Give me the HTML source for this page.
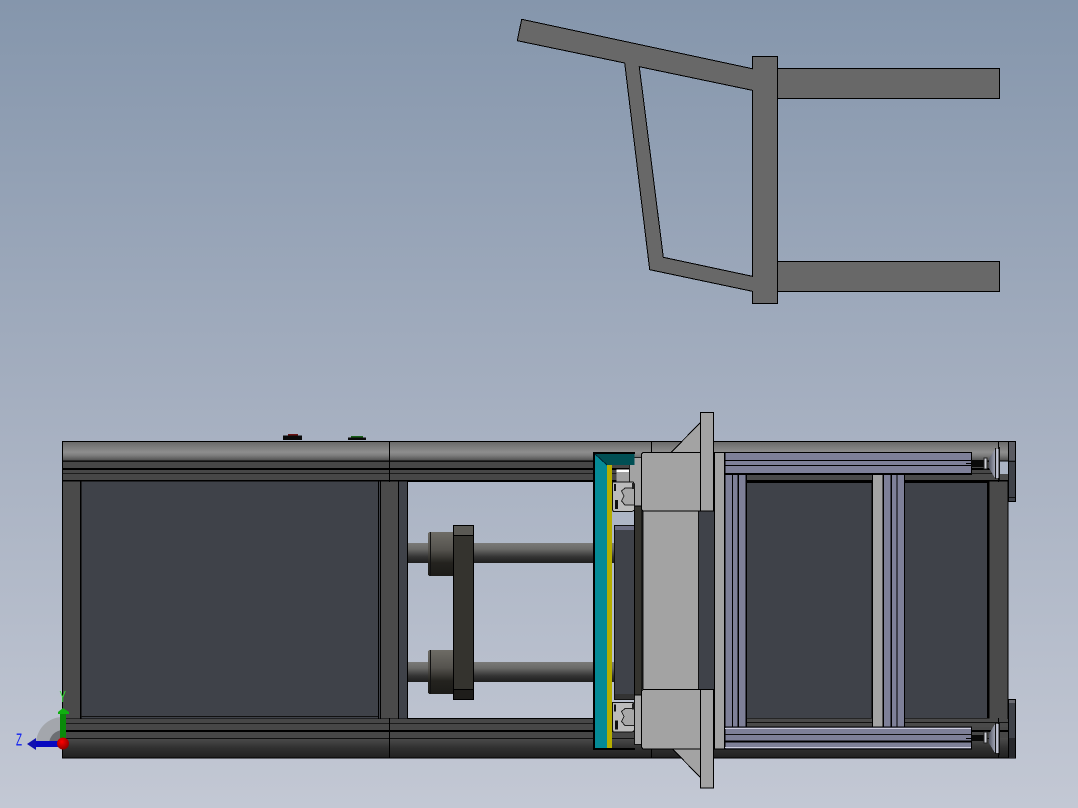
<!DOCTYPE html>
<html><head><meta charset="utf-8"><style>html,body{margin:0;padding:0;width:1078px;height:808px;overflow:hidden;background:#a9b2c2}svg{display:block}</style></head><body>
<svg width="1078" height="808" viewBox="0 0 1078 808" xmlns="http://www.w3.org/2000/svg" shape-rendering="crispEdges">
<defs>
<linearGradient id="bg" x1="0" y1="0" x2="0" y2="1"><stop offset="0" stop-color="#8596ac"/><stop offset=".5" stop-color="#a5afc0"/><stop offset="1" stop-color="#c3c8d4"/></linearGradient>
<linearGradient id="tr" x1="0" y1="0" x2="0" y2="1"><stop offset="0" stop-color="#676767"/><stop offset=".25" stop-color="#7a7a7a"/><stop offset=".55" stop-color="#8e8e8e"/><stop offset=".72" stop-color="#7c7c7c"/><stop offset="1" stop-color="#4c4c4c"/></linearGradient>
<linearGradient id="br" x1="0" y1="0" x2="0" y2="1"><stop offset="0" stop-color="#4c4c4c"/><stop offset=".5" stop-color="#303030"/><stop offset="1" stop-color="#202020"/></linearGradient>
<linearGradient id="rod" x1="0" y1="0" x2="0" y2="1"><stop offset="0" stop-color="#7a7a78"/><stop offset=".3" stop-color="#6a6a68"/><stop offset=".7" stop-color="#333"/><stop offset="1" stop-color="#1e1e1e"/></linearGradient>
<linearGradient id="hub" x1="0" y1="0" x2="0" y2="1"><stop offset="0" stop-color="#6e6c66"/><stop offset=".4" stop-color="#55534e"/><stop offset=".7" stop-color="#24231f"/><stop offset="1" stop-color="#1c1b18"/></linearGradient>
<linearGradient id="disc" x1="0" y1="0" x2="1" y2="0"><stop offset="0" stop-color="#555866"/><stop offset=".6" stop-color="#a8acbc"/><stop offset="1" stop-color="#e0e2ee"/></linearGradient>
<radialGradient id="ball" cx=".4" cy=".35" r=".7"><stop offset="0" stop-color="#f00"/><stop offset="1" stop-color="#800"/></radialGradient>
<g id="disc1"><path d="M989 12 L995 2 H1000 V31 H995 L989 21Z" fill="url(#disc)"/><rect x="995" y="1" width="1" height="31" fill="#111"/><rect x="998.500" y="0" width="1.500" height="33" fill="#111"/></g>
<g id="carr"><path d="M612.500 482 H633 L634.500 484 V510 L632 511.500 H613.500 L612.500 510Z" fill="#bcbcbc" stroke="#111" stroke-width="1"/><path d="M634 488 H625 L621.500 491 L624 496 L621.500 501 L625 505 H634" fill="#a8a8a8" stroke="#222" stroke-width="1"/><rect x="614" y="484" width="2" height="7" fill="#111"/><rect x="615" y="500" width="3" height="9" fill="#111"/><rect x="632" y="483" width="2.500" height="6" fill="#222"/></g>
</defs>
<rect width="1078" height="808" fill="url(#bg)"/>

<!-- upper profile -->
<path fill-rule="evenodd" fill="#686868" stroke="#000" stroke-width="1" d="M521.700 19.300 L752.300 68.700 V56.300 H777.700 V68.300 H999.700 V98.300 H777.700 V261.300 H999.700 V291.300 H777.700 V303.300 H752.300 V291.300 L649.700 269.700 L624.700 63 L517.300 40.700Z M639.300 66.700 L752.300 90.300 V276.300 L663.300 257.300Z"/>
<path d="M777.500 68 V99 M777.500 261 V292" stroke="#000" stroke-width="1" fill="none"/>

<!-- buttons -->
<rect x="288" y="434" width="10" height="1.500" fill="#6a1212"/><rect x="283" y="435.500" width="19" height="4.500" fill="#0a0a0a"/>
<rect x="351" y="436" width="12" height="1.500" fill="#186018"/><rect x="348" y="437.500" width="18" height="2.500" fill="#0a0a0a"/>

<!-- rails -->
<rect x="62.500" y="441.500" width="953" height="19.500" fill="url(#tr)" stroke="#000" stroke-width="1"/>
<rect x="62.500" y="461" width="936" height="20.500" fill="#474747"/>
<rect x="62" y="461" width="936" height="1" fill="#111"/><rect x="62" y="468" width="936" height="2" fill="#000"/><rect x="62" y="473" width="936" height="1" fill="#1c1c1c"/><rect x="62" y="480" width="946" height="2" fill="#000"/>
<rect x="62.500" y="718" width="953" height="40" fill="#474747"/>
<rect x="62.500" y="738" width="953" height="20" fill="url(#br)"/>
<rect x="62" y="718" width="946" height="1" fill="#000"/><rect x="62" y="723" width="946" height="1" fill="#1c1c1c"/><rect x="62" y="730" width="946" height="2" fill="#000"/><rect x="62" y="738" width="936" height="1" fill="#111"/>
<rect x="62" y="757.500" width="954" height="1" fill="#000"/><rect x="62" y="441" width="1" height="317" fill="#000"/>

<!-- left frame -->
<rect x="63" y="481.500" width="17" height="237" fill="#4a4a4a"/>
<rect x="80" y="481.500" width="1.500" height="237" fill="#000"/>
<rect x="81.500" y="481.500" width="296.500" height="237" fill="#3f4249"/>
<rect x="81" y="716" width="297" height="1" fill="#111"/>
<rect x="378" y="481.500" width="3" height="237" fill="#000"/>
<rect x="379" y="481.500" width="1" height="237" fill="#3f4249"/>
<rect x="381" y="481.500" width="17" height="237" fill="#4a4a4a"/>
<rect x="398" y="481.500" width="1" height="237" fill="#000"/>
<rect x="399" y="481.500" width="8" height="237" fill="#3f4249"/>
<rect x="407" y="481.500" width="1" height="237" fill="#000"/>
<rect x="389" y="441" width="1" height="41" fill="#000"/><rect x="389" y="718" width="1" height="40" fill="#000"/>
<rect x="651" y="441" width="1" height="12" fill="#000"/><rect x="651" y="749" width="1" height="9" fill="#000"/>

<!-- rods & hubs -->
<rect x="408" y="543" width="206" height="20" fill="url(#rod)"/>
<rect x="408" y="662" width="206" height="20" fill="url(#rod)"/>
<rect x="428" y="532" width="26" height="44" rx="2" fill="url(#hub)"/><rect x="430" y="532" width="1" height="44" fill="#111"/>
<rect x="428" y="650" width="26" height="44" rx="2" fill="url(#hub)"/><rect x="430" y="650" width="1" height="44" fill="#111"/>
<rect x="453.500" y="525.500" width="20" height="174" fill="#34332e" stroke="#000" stroke-width="1"/>
<rect x="454" y="526" width="19" height="9" fill="#5a5954"/><rect x="454" y="535" width="19" height="1" fill="#000"/>
<rect x="454" y="690" width="19" height="9" fill="#1e1d1a"/><rect x="454" y="689" width="19" height="1" fill="#000"/>

<!-- behind teal -->
<rect x="616.500" y="472" width="13" height="10" fill="#a0a0a0"/>
<rect x="616.500" y="469.500" width="13" height="2.500" fill="#fff"/>
<rect x="614.500" y="525.500" width="20" height="174" fill="#3f4249" stroke="#111" stroke-width="1"/>
<rect x="615" y="526" width="19" height="4" fill="#6c6e84"/>
<rect x="615" y="694" width="19" height="5" fill="#333"/>
<rect x="629.500" y="457.500" width="12" height="49" fill="#a3a3a3" stroke="#222" stroke-width="1"/>
<rect x="634.500" y="694" width="7" height="50.500" fill="#a8a8a8" stroke="#111" stroke-width="1"/>
<rect x="634.500" y="506" width="7.500" height="189" fill="#34332e" stroke="#000" stroke-width="1"/>
<use href="#carr"/>
<use href="#carr" transform="translate(0,220.500)"/>

<!-- teal frame -->
<rect x="593" y="452" width="2.500" height="297.500" fill="#000"/>
<rect x="593" y="452" width="42" height="2" fill="#000"/>
<rect x="593" y="748" width="42" height="2" fill="#000"/>
<rect x="595" y="454" width="12" height="294" fill="#058a96"/>
<rect x="607" y="465" width="5" height="283" fill="#b5ad00"/>
<path d="M595 454 H634.500 V465 H607Z" fill="#004f54"/>
<path d="M595 454 L607 465" stroke="#002233" stroke-width="1" fill="none"/>

<!-- flange -->
<path d="M671 452.500 L700.500 422.500 V452.500Z" fill="#a3a3a3" stroke="#000" stroke-width="1"/>
<path d="M672.500 749 L700.500 777.500 V749Z" fill="#a3a3a3" stroke="#000" stroke-width="1"/>
<rect x="699" y="511" width="15" height="178.500" fill="#3f4249"/>
<rect x="642" y="511" width="57" height="178.500" fill="#a3a3a3"/>
<rect x="642" y="511" width="1.500" height="178" fill="#111"/>
<rect x="698" y="511" width="1" height="178" fill="#111"/>
<path d="M641.500 454 L643 452.500 H700.500 V511 H643 L641.500 509.500Z" fill="#a3a3a3" stroke="#000" stroke-width="1"/>
<path d="M641.500 691 L643 689.500 H700.500 V749 H643 L641.500 747Z" fill="#a3a3a3" stroke="#000" stroke-width="1"/>
<rect x="700.500" y="412.500" width="13" height="98.500" fill="#a3a3a3" stroke="#000" stroke-width="1"/>
<rect x="700.500" y="689.500" width="13" height="98.500" fill="#a3a3a3" stroke="#000" stroke-width="1"/>
<rect x="714.500" y="452.500" width="10" height="296.500" fill="#a3a3a3" stroke="#000" stroke-width="1"/>

<!-- right frame -->
<rect x="725" y="474" width="283" height="253" fill="#000"/>
<rect x="725.500" y="474" width="6.500" height="253" fill="#7e8098"/>
<rect x="733" y="474" width="4.500" height="253" fill="#7e8098"/>
<rect x="739" y="474" width="6.500" height="253" fill="#7e8098"/>
<rect x="747" y="474" width="125" height="6" fill="#4a4a4a"/>
<rect x="747" y="483" width="124.500" height="235" fill="#3f4249"/>
<rect x="747" y="718.500" width="125" height="8.500" fill="#4a4a4a"/><rect x="747" y="722" width="125" height="1" fill="#111"/>
<rect x="873" y="474" width="9.500" height="253" fill="#a3a3a3"/>
<rect x="884" y="474" width="6.500" height="253" fill="#7e8098"/>
<rect x="892" y="474" width="4.500" height="253" fill="#7e8098"/>
<rect x="897.500" y="474" width="6.500" height="253" fill="#7e8098"/>
<rect x="905" y="474" width="103" height="6" fill="#4a4a4a"/>
<rect x="905" y="483" width="82" height="235" fill="#3f4249"/>
<rect x="905" y="718.500" width="103" height="8.500" fill="#4a4a4a"/><rect x="905" y="722" width="103" height="1" fill="#111"/>
<rect x="989.500" y="481.500" width="18" height="237" fill="#4a4a4a"/>
<rect x="1007.500" y="481" width="1" height="238" fill="#000"/>

<!-- blue rails -->
<rect x="725" y="452.500" width="246.500" height="22" fill="#7e8098" stroke="#000" stroke-width="1"/>
<rect x="725" y="460" width="246" height="1" fill="#000"/><rect x="725" y="465" width="246" height="1" fill="#000"/><rect x="725" y="473" width="246" height="2" fill="#000"/>
<rect x="725" y="727" width="246.500" height="22" fill="#7e8098" stroke="#000" stroke-width="1"/>
<rect x="725" y="728" width="246" height="1" fill="#ccccdd"/><rect x="725" y="734" width="246" height="1" fill="#111"/><rect x="725" y="740.500" width="246" height="2" fill="#000"/><rect x="725" y="747" width="246" height="1" fill="#ccccdd"/>

<!-- end caps -->
<rect x="1008.500" y="441.500" width="7" height="60" fill="#3f4249" stroke="#000" stroke-width="1"/>
<rect x="1009" y="442" width="6" height="18" fill="#5a5b62"/><rect x="1009" y="461" width="6" height="1" fill="#111"/>
<rect x="1009" y="497" width="6" height="1" fill="#111"/>
<rect x="1008.500" y="699.500" width="7" height="58.500" fill="#3f4249" stroke="#000" stroke-width="1"/>
<rect x="1009" y="700" width="6" height="3" fill="#6a6b72"/><rect x="1009" y="738" width="6" height="20" fill="#27282c"/>
<rect x="998" y="441" width="1" height="41" fill="#000"/><rect x="998" y="718" width="1" height="40" fill="#000"/>

<!-- screws -->
<rect x="971" y="460" width="13" height="7" fill="#0a0a0a"/><rect x="966" y="463" width="6" height="1" fill="#000"/>
<rect x="984" y="458" width="3" height="11" fill="#cfd0d8" stroke="#222" stroke-width=".6"/>
<rect x="971" y="735" width="13" height="6" fill="#0a0a0a"/><rect x="966" y="738" width="6" height="1" fill="#000"/>
<rect x="984" y="732" width="3" height="11" fill="#cfd0d8" stroke="#222" stroke-width=".6"/>
<use href="#disc1" transform="translate(0,447)"/>
<use href="#disc1" transform="translate(0,722)"/>

<!-- triad -->
<g shape-rendering="auto">
<path d="M36 744 A27 27 0 0 1 63 717 V730 A14 14 0 0 0 49 744Z" fill="#a3a6ac"/>
<path d="M49 744 A14 14 0 0 1 63 730 V744Z" fill="#6c6e72"/>
<rect x="60" y="712" width="6" height="26" fill="#0a8a0a"/>
<path d="M58 712 L63 708 L69 712 V714 H58Z" fill="#10b010"/>
<rect x="35" y="741" width="24" height="6" fill="#0808c0"/>
<path d="M36 738 L27 744 L36 750Z" fill="#1010b0"/>
<circle cx="63" cy="743.500" r="6" fill="url(#ball)"/>
<text transform="translate(16,745.500) scale(.55,1)" font-family="Liberation Sans, sans-serif" font-size="18" fill="#1020f0">Z</text>
<text transform="translate(59.500,702) scale(.6,1)" font-family="Liberation Sans, sans-serif" font-size="16" fill="#30e030">Y</text>
</g>
</svg>
</body></html>
